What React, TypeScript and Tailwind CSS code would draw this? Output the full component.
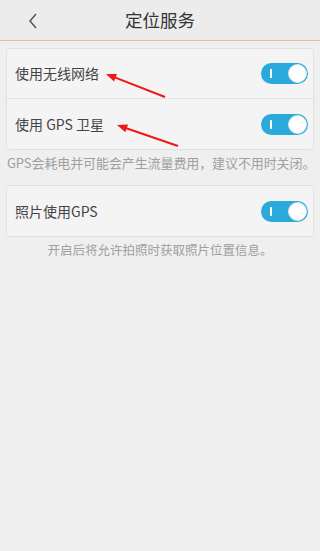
import React from 'react';

const font = {fontFamily: '"Noto Sans CJK SC", "Noto Sans", sans-serif'};

function Toggle() {
  return (
    <div className="relative flex h-[21px] w-[47px] items-center rounded-full bg-[#2aa9dc]">
      <span className="ml-[9px] h-[9px] w-[2px] bg-white" />
      <span className="absolute right-[1px] top-[1px] h-[19px] w-[19px] rounded-full border border-[#d8e6ec] bg-white" />
    </div>
  );
}

function Row({label, border}: {label: string; border?: boolean}) {
  return (
    <div className={`flex h-[50px] items-center justify-between pl-[8px] pr-[5px] ${border ? 'border-b border-[#e2e2e2]' : ''}`}>
      <span className="text-[14px] text-[#444]">{label}</span>
      <Toggle />
    </div>
  );
}

function Arrow({x1, y1, x2, y2}: {x1: number; y1: number; x2: number; y2: number}) {
  const a = Math.atan2(y2 - y1, x2 - x1);
  const l = 11;
  const w = 0.38;
  const p1 = [x2 - l * Math.cos(a - w), y2 - l * Math.sin(a - w)];
  const p2 = [x2 - l * Math.cos(a + w), y2 - l * Math.sin(a + w)];
  return (
    <g>
      <line x1={x1} y1={y1} x2={x2 - 6 * Math.cos(a)} y2={y2 - 6 * Math.sin(a)} stroke="#f01818" strokeWidth="2" />
      <polygon points={`${x2},${y2} ${p1[0]},${p1[1]} ${p2[0]},${p2[1]}`} fill="#f01818" />
    </g>
  );
}

export default function App() {
  return (
    <div className="relative h-[551px] w-[320px] overflow-hidden bg-[#efefef]" style={font}>
      <header className="relative flex h-[41px] items-center justify-center border-b border-[#f6b889] bg-[#ececec]">
        <svg className="absolute left-[28px] top-[13px]" width="10" height="16" viewBox="0 0 10 16">
          <path d="M8 1 L2 8 L8 15" fill="none" stroke="#555" strokeWidth="1.5" />
        </svg>
        <h1 className="text-[17.5px] text-[#333]">定位服务</h1>
      </header>

      <div className="px-[6px] pt-[7px]">
        <div className="rounded-[3px] border border-[#e0e0e0] bg-[#f4f4f4]">
          <Row label="使用无线网络" border />
          <Row label="使用 GPS 卫星" />
        </div>
        <p className="mt-[3px] whitespace-nowrap pl-[1px] text-[13px] leading-[20px] tracking-[-0.1px] text-[#a0a0a0]">
          GPS会耗电并可能会产生流量费用，建议不用时关闭。
        </p>
        <div className="mt-[12px] rounded-[3px] border border-[#e0e0e0] bg-[#f4f4f4]">
          <Row label="照片使用GPS" />
        </div>
        <p className="mt-[5px] text-center text-[12.5px] leading-[16px] text-[#a0a0a0]">
          开启后将允许拍照时获取照片位置信息。
        </p>
      </div>

      <svg className="pointer-events-none absolute left-0 top-0" width="320" height="551">
        <Arrow x1={165} y1={97} x2={106} y2={74} />
        <Arrow x1={178} y1={146} x2={117} y2={125} />
      </svg>
    </div>
  );
}
